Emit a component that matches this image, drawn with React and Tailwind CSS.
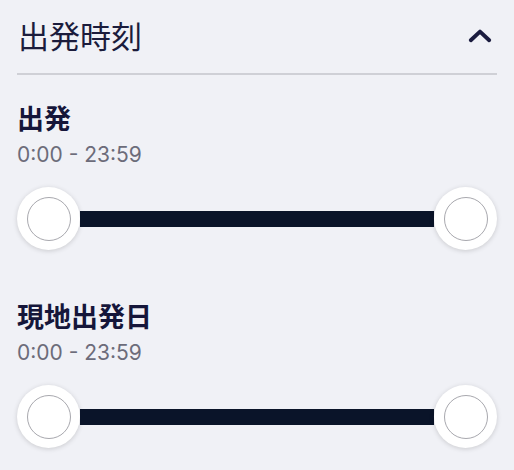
import React from "react";

const Thumb = () => (
  <div className="w-[63px] h-[63px] shrink-0 rounded-full bg-white shadow-[0_1px_5px_rgba(0,0,0,0.16)] flex items-center justify-center">
    <div className="w-[44px] h-[44px] rounded-full border-[1.5px] border-[#a8a8ae] bg-white" />
  </div>
);

const RangeRow = ({ label, value }) => (
  <div className="flex flex-col">
    <div className="text-[27px] leading-[32px] font-bold text-[#15163a]">{label}</div>
    <div className="mt-[6px] text-[21px] leading-[26px] text-[#6c6c7a]">{value}</div>
    <div className="mt-[19px] flex items-center">
      <Thumb />
      <div className="flex-1 h-[16px] bg-[#0a1429]" />
      <Thumb />
    </div>
  </div>
);

export default function App() {
  return (
    <div
      className="w-[514px] h-[470px] overflow-hidden bg-[#f0f1f6] px-[17px]"
      style={{ fontFamily: '"Inter", "Noto Sans CJK JP", sans-serif' }}
    >
      <div className="h-[75px] flex items-center justify-between border-b-2 border-[#cfd0d6]">
        <div className="pl-[1px] text-[31px] leading-[40px] text-[#1b1c3c]">出発時刻</div>
        <svg width="26" height="26" viewBox="0 0 24 24" className="mr-[4px]">
          <path d="M3.5 15 L12 7 L20.5 15" fill="none" stroke="#1b1c3f" strokeWidth="3.6" strokeLinecap="round" strokeLinejoin="round" />
        </svg>
      </div>
      <div className="pt-[29px] flex flex-col gap-[52px]">
        <RangeRow label="出発" value="0:00 - 23:59" />
        <RangeRow label="現地出発日" value="0:00 - 23:59" />
      </div>
    </div>
  );
}
